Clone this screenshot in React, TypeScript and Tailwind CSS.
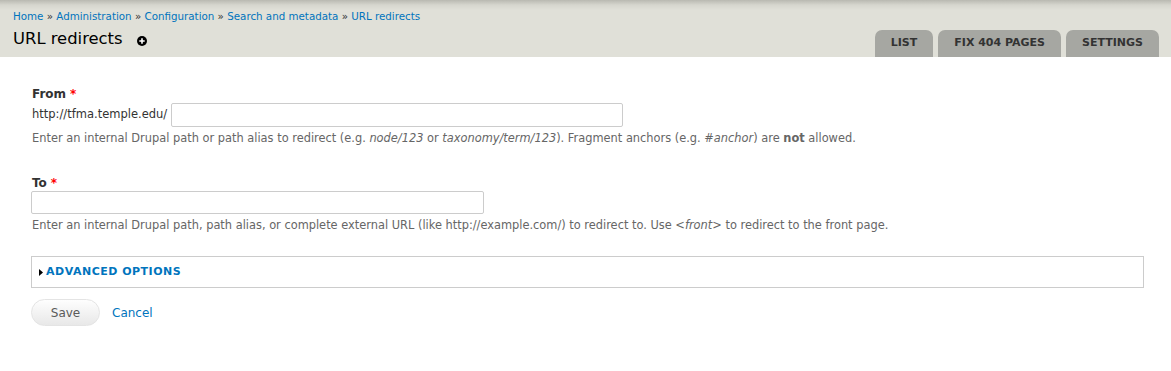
import React from 'react';

const font = { fontFamily: '"DejaVu Sans", Verdana, sans-serif' };

const crumbs = ['Home', 'Administration', 'Configuration', 'Search and metadata', 'URL redirects'];
const tabs = ['List', 'Fix 404 pages', 'Settings'];

function Required() {
    return <span className="text-[#ff0000] ml-1" title="This field is required.">*</span>;
}

export default function App() {
    return (
        <div className="min-h-[371px] bg-white text-[#333]" style={font}>
            {/* branding / header */}
            <div className="bg-[#e0e0d8] bg-[linear-gradient(to_bottom,#b9b9b1_0px,#d6d6ce_5px,#e0e0d8_10px)] pl-[13px] pr-[12px] pt-[8px] h-[57px] flex justify-between">
                <div>
                    <div className="text-[10.3px] leading-[16px]">
                        {crumbs.map((c, i) => (
                            <span key={c}>
                                {i > 0 && <span className="text-[#333]"> » </span>}
                                <a className="text-[#0074bd]">{c}</a>
                            </span>
                        ))}
                    </div>
                    <h1 className="mt-[5px] text-[16.4px] leading-[20px] text-[#000] flex items-center">
                        URL redirects
                        <svg className="ml-[14px] mt-[3px]" width="10" height="10" viewBox="0 0 10 10">
                            <circle cx="5" cy="5" r="5" fill="#000" />
                            <path d="M5 2.3v5.4M2.3 5h5.4" stroke="#fff" strokeWidth="1.6" />
                        </svg>
                    </h1>
                </div>
                <ul className="flex items-end gap-[5px]">
                    {tabs.map((t) => (
                        <li key={t} className="h-[27px] px-[16px] rounded-t-[7px] bg-[#a6a7a2] text-[#333] font-bold uppercase text-[11px] flex items-center">
                            {t}
                        </li>
                    ))}
                </ul>
            </div>

            {/* form */}
            <div className="pl-[31px] pr-[27px] pt-[29px] text-[12px]">
                <div>
                    <label className="block font-bold text-[12px] leading-[16px] pl-[1px]">
                        From<Required />
                    </label>
                    <div className="flex items-center mt-[1px]">
                        <span className="pl-[1px] pr-[4px] text-[11.5px]">http://tfma.temple.edu/</span>
                        <input className="w-[452px] h-[24px] border border-[#ccc] rounded-[2px] outline-none" />
                    </div>
                    <div className="text-[11.4px] leading-[14px] text-[#666] mt-[4px] pl-[1px]">
                        Enter an internal Drupal path or path alias to redirect (e.g. <em>node/123</em> or <em>taxonomy/term/123</em>). Fragment anchors (e.g. <em>#anchor</em>) are <strong>not</strong> allowed.
                    </div>
                </div>

                <div className="mt-[31px]">
                    <label className="block font-bold text-[12px] leading-[15px] pl-[1px]">
                        To<Required />
                    </label>
                    <input className="block mt-0 w-[453px] h-[23px] border border-[#ccc] rounded-[2px] outline-none" />
                    <div className="text-[11.4px] leading-[14px] text-[#666] mt-[4px] pl-[1px]">
                        Enter an internal Drupal path, path alias, or complete external URL (like http://example.com/) to redirect to. Use <em>&lt;front&gt;</em> to redirect to the front page.
                    </div>
                </div>

                <fieldset className="mt-[24px] border border-[#ccc] h-[32px] px-[7px] flex items-center">
                    <a className="flex items-center text-[#0074bd] font-bold uppercase text-[11px] tracking-[0.5px]">
                        <svg width="4" height="7" viewBox="0 0 4 7" className="mr-[3px]">
                            <path d="M0 0L4 3.5L0 7Z" fill="#000" />
                        </svg>
                        Advanced options
                    </a>
                </fieldset>

                <div className="mt-[11px] flex items-center">
                    <button className="w-[69px] h-[27px] rounded-full border border-[#e4e4e4] bg-[linear-gradient(to_bottom,#fefefe,#e8e8e8)] text-[#5a5a5a] text-[12px]">
                        Save
                    </button>
                    <a className="ml-[12px] text-[#0074bd] text-[12px]">Cancel</a>
                </div>
            </div>
        </div>
    );
}
